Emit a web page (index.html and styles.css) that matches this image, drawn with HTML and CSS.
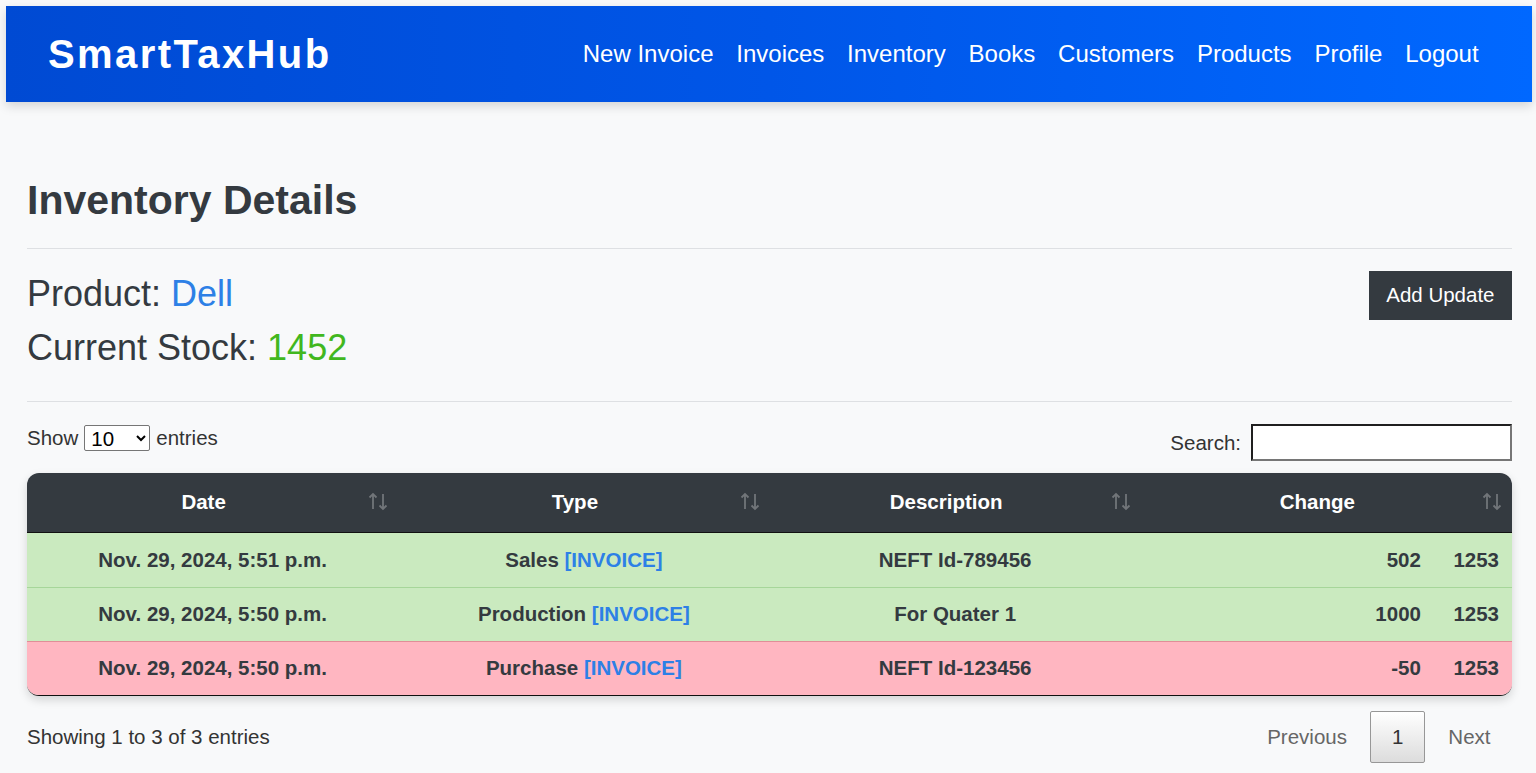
FILE: index.html
```html
<!DOCTYPE html>
<html lang="en">
<head>
<meta charset="utf-8">
<title>Inventory Details - SmartTaxHub</title>
<link rel="stylesheet" href="styles.css">
</head>
<body>
<nav class="navbar">
  <a class="brand" href="#">SmartTaxHub</a>
  <ul class="nav-links">
    <li><a href="#">New Invoice</a></li>
    <li><a href="#">Invoices</a></li>
    <li><a href="#">Inventory</a></li>
    <li><a href="#">Books</a></li>
    <li><a href="#">Customers</a></li>
    <li><a href="#">Products</a></li>
    <li><a href="#">Profile</a></li>
    <li><a href="#">Logout</a></li>
  </ul>
</nav>

<main class="container">
  <h1 class="page-title">Inventory Details</h1>
  <hr class="divider">

  <section class="info-row">
    <div class="info">
      <div class="info-line">Product: <span class="product-name">Dell</span></div>
      <div class="info-line">Current Stock: <span class="stock">1452</span></div>
    </div>
    <button class="btn-dark" type="button">Add Update</button>
  </section>

  <hr class="divider divider-2">

  <div class="controls">
    <label class="length">Show
      <select class="length-select">
        <option>10</option>
        <option>25</option>
        <option>50</option>
        <option>100</option>
      </select>
      entries</label>
    <label class="search">Search: <input class="search-input" type="search"></label>
  </div>

  <div class="table-wrap">
    <table class="data-table">
      <colgroup>
        <col class="c-main">
        <col class="c-main">
        <col class="c-main">
        <col class="c-change">
        <col class="c-total">
      </colgroup>
      <thead>
        <tr>
          <th><div class="th-inner"><span class="th-label">Date</span><svg class="sort" viewBox="0 0 20 19" width="20" height="19"><path d="M5 17V2M1.5 5.5L5 2l3.5 3.5M15 2v15M11.5 13.5L15 17l3.5-3.5"/></svg></div></th>
          <th><div class="th-inner"><span class="th-label">Type</span><svg class="sort" viewBox="0 0 20 19" width="20" height="19"><path d="M5 17V2M1.5 5.5L5 2l3.5 3.5M15 2v15M11.5 13.5L15 17l3.5-3.5"/></svg></div></th>
          <th><div class="th-inner"><span class="th-label">Description</span><svg class="sort" viewBox="0 0 20 19" width="20" height="19"><path d="M5 17V2M1.5 5.5L5 2l3.5 3.5M15 2v15M11.5 13.5L15 17l3.5-3.5"/></svg></div></th>
          <th colspan="2"><div class="th-inner"><span class="th-label">Change</span><svg class="sort" viewBox="0 0 20 19" width="20" height="19"><path d="M5 17V2M1.5 5.5L5 2l3.5 3.5M15 2v15M11.5 13.5L15 17l3.5-3.5"/></svg></div></th>
        </tr>
      </thead>
      <tbody>
        <tr class="row-success first">
          <td>Nov. 29, 2024, 5:51 p.m.</td>
          <td>Sales <a href="#">[INVOICE]</a></td>
          <td>NEFT Id-789456</td>
          <td class="num">502</td>
          <td class="num">1253</td>
        </tr>
        <tr class="row-success">
          <td>Nov. 29, 2024, 5:50 p.m.</td>
          <td>Production <a href="#">[INVOICE]</a></td>
          <td>For Quater 1</td>
          <td class="num">1000</td>
          <td class="num">1253</td>
        </tr>
        <tr class="row-danger">
          <td>Nov. 29, 2024, 5:50 p.m.</td>
          <td>Purchase <a href="#">[INVOICE]</a></td>
          <td>NEFT Id-123456</td>
          <td class="num">-50</td>
          <td class="num">1253</td>
        </tr>
      </tbody>
    </table>
  </div>

  <div class="table-footer">
    <div class="info-text">Showing 1 to 3 of 3 entries</div>
    <div class="paginate">
      <a class="page-btn disabled" href="#">Previous</a>
      <a class="page-btn current" href="#">1</a>
      <a class="page-btn disabled" href="#">Next</a>
    </div>
  </div>
</main>
</body>
</html>
```

FILE: styles.css
```css
* {
  box-sizing: border-box;
}

html, body {
  margin: 0;
  padding: 0;
}

body {
  background: #f8f9fa;
  color: #333;
  font-family: "Liberation Sans", Arial, sans-serif;
  font-size: 20.5px;
  overflow: hidden;
}

a {
  text-decoration: none;
}

/* Navbar */
.navbar {
  margin: 6px 4px 0 6px;
  height: 96px;
  padding: 0 42px 0 40px;
  display: flex;
  align-items: center;
  justify-content: space-between;
  background: linear-gradient(90deg, #004ad3 0%, #0056e8 50%, #0068ff 100%);
  box-shadow: 0 4px 10px rgba(0, 0, 0, 0.15);
}

.brand {
  color: #fff;
  font-size: 40px;
  font-weight: bold;
  letter-spacing: 2.4px;
  line-height: 48px;
  margin-left: 2px;
}

.nav-links {
  list-style: none;
  margin: 0;
  padding: 0;
  display: flex;
}

.nav-links a {
  display: block;
  color: #fff;
  font-size: 24px;
  line-height: 30px;
  padding: 0 11.4px;
}

/* Content */
.container {
  padding: 74px 24px 0 27px;
}

.page-title {
  margin: 0;
  font-size: 41px;
  line-height: 48px;
  font-weight: bold;
  color: #343a40;
}

.divider {
  margin: 24px 0 18px;
  border: 0;
  border-top: 1px solid #dee0e3;
  height: 0;
}

.divider-2 {
  margin: 26px 0 22px;
}

.info-row {
  display: flex;
  justify-content: space-between;
  align-items: flex-start;
}

.info-line {
  font-size: 36px;
  line-height: 54px;
  color: #343a40;
}

.product-name {
  color: #2d80e6;
}

.stock {
  color: #41b71e;
}

.btn-dark {
  margin-top: 4px;
  background: #343a40;
  color: #fff;
  border: 0;
  border-radius: 0;
  font-family: inherit;
  font-size: 20.5px;
  line-height: 30px;
  padding: 9px 17.5px 10px;
}

/* Controls */
.controls {
  display: flex;
  justify-content: space-between;
  align-items: flex-start;
  margin-bottom: 12px;
}

.length {
  display: flex;
  align-items: center;
  gap: 6px;
  margin-top: 1px;
  line-height: 26px;
}

.length-select {
  width: 66px;
  height: 26px;
  font-family: inherit;
  font-size: 20.5px;
  padding: 0 2px;
  border: 1px solid #767676;
  border-radius: 2px;
  background: #fff;
  color: #000;
}

.search {
  display: flex;
  align-items: center;
  gap: 10px;
}

.search-input {
  width: 261px;
  height: 37px;
  border-width: 2px;
  border-style: solid;
  border-color: #1f1f1f #767676 #767676 #1f1f1f;
  background: #fff;
  font-family: inherit;
  font-size: 20px;
  padding: 0 4px;
}

/* Table */
.table-wrap {
  border-radius: 12px;
  overflow: hidden;
  box-shadow: 0 4px 10px rgba(0, 0, 0, 0.15);
  border-bottom: 1px solid #111;
}

.data-table {
  width: 100%;
  table-layout: fixed;
  border-collapse: separate;
  border-spacing: 0;
}

.c-main {
  width: 371px;
}

.c-change {
  width: 293px;
}

.c-total {
  width: 78px;
}

.data-table th {
  background: #343a40;
  color: #fff;
  font-weight: bold;
  font-size: 20.5px;
  line-height: 30px;
  padding: 14px 10px 15px 12px;
  border-bottom: 1px solid #111;
}

.th-inner {
  display: flex;
  align-items: center;
}

.th-label {
  flex: 1;
  text-align: center;
}

.sort {
  flex: none;
  fill: none;
  stroke: rgba(255, 255, 255, 0.3);
  stroke-width: 1.8;
  margin-top: -1px;
}

.data-table td {
  font-weight: bold;
  font-size: 20.5px;
  line-height: 30px;
  color: #343a40;
  text-align: center;
  padding: 11px 13px 12px;
  border-top: 1px solid transparent;
}

.data-table td.num {
  text-align: right;
}

.data-table td a {
  color: #2d80e6;
}

.row-success td {
  background: #caeabf;
  border-top-color: #a6d699;
}

.row-danger td {
  background: #ffb6c1;
  border-top-color: #e08e98;
}

.row-success.first td {
  border-top-color: #caeabf;
}

/* Footer */
.table-footer {
  display: flex;
  justify-content: space-between;
  align-items: center;
  margin-top: 15px;
}

.info-text {
  color: #333;
}

.paginate {
  display: flex;
  align-items: center;
}

.page-btn {
  display: block;
  margin-left: 2px;
  padding: 10px 20.5px;
  font-size: 20.5px;
  line-height: 30px;
  border: 1px solid transparent;
  border-radius: 2px;
  color: #333;
}

.page-btn.disabled {
  color: #666;
}

.page-btn.current {
  background: linear-gradient(to bottom, #fff 0%, #dcdcdc 100%);
  border-color: #979797;
}
```
